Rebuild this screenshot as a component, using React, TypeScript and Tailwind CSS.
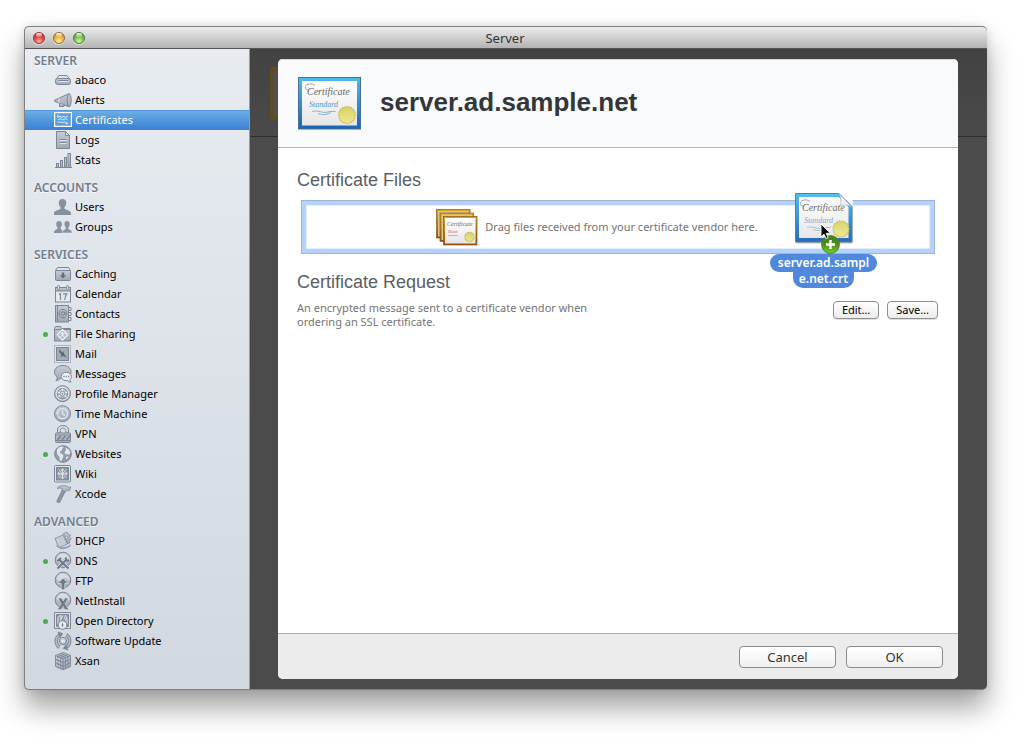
import React from 'react';

const line = '#7d8695';
const pale = '#dfe4ea';

function Glyph({ name }: { name: string }) {
  const g = 'url(#steel)';
  switch (name) {
    case 'abaco':
      return (
        <g stroke={line} fill={g}>
          <path d="M5 5.500h8l3 4h-14z" fill={pale} />
          <rect x="1.500" y="8.500" width="15" height="6" rx="2.200" />
          <path d="M4 11.500h10" stroke={pale} />
          <path d="M4 10.500h10" />
        </g>
      );
    case 'alerts':
      return (
        <g stroke={line} fill={g} strokeLinejoin="round">
          <path d="M.5 10.200 14.500 3.800v12.800L.5 11.400z" />
          <ellipse cx="15.200" cy="10.200" rx="2" ry="6.500" />
          <path d="M5.500 13.500v3h4.500v-1.500" />
          <path d="M5 8.500v4.500" stroke={pale} />
        </g>
      );
    case 'certificates':
      return (
        <g stroke="#fff" fill="none">
          <rect x=".6" y="2.600" width="16.800" height="13.800" strokeWidth="1.200" fill="#5b9fe0" />
          <path d="M3 5l2.500 2M3 7.500l3-1.500 2 1.500L10 6l1 1.500 3-1.500M4 9.500l3-.7 1.500 1 3-1 2 .7M3.500 12h3.500l1 .8 2-1 3.500 1.200M11.500 13.800h2.500" strokeWidth=".9" opacity=".85" />
        </g>
      );
    case 'logs':
      return (
        <g stroke={line} fill={g}>
          <path d="M2.500 1.500h9l4 4v13h-13z" />
          <path d="M11.500 1.500v4h4z" fill={pale} />
          <path d="M5.500 9.500h7M5.500 12.500h7" />
          <path d="M5.500 10.500h7M5.500 13.500h7" stroke={pale} />
        </g>
      );
    case 'stats':
      return (
        <g stroke={line} fill={g}>
          <rect x="2.500" y="13.500" width="2" height="4" />
          <rect x="6.500" y="10.500" width="2" height="7" />
          <rect x="10.500" y="7.500" width="2" height="10" />
          <rect x="14" y="3.500" width="2.500" height="14" />
          <path d="M1 17.500h17" />
        </g>
      );
    case 'users':
      return (
        <path fill="#87909d" d="M8.500 2c2.300 0 3.800 1.600 3.700 4 0 1.800-.8 3.200-1.700 4.100v1.700c1 1.200 6 1.500 6.500 4V18H0v-2.200c.5-2.500 5.500-2.800 6.500-4v-1.700C5.600 9.200 4.800 7.800 4.800 6 4.700 3.600 6.200 2 8.500 2z" />
      );
    case 'groups':
      return (
        <g fill="#8992a0">
          <path d="M5 4c1.800 0 3 1.200 2.900 3.200 0 1.300-.6 2.500-1.300 3.200v1.400c.8 1 2.200 1.200 2.200 3V16H0v-1.400c.4-1.600 2.800-1.900 3.500-2.800v-1.400C2.800 9.700 2.200 8.500 2.200 7.200 2.100 5.200 3.200 4 5 4z" />
          <path stroke="#e2e6ec" strokeWidth=".6" d="M13 3.800c1.900 0 3.100 1.300 3 3.300 0 1.400-.6 2.500-1.300 3.300v1.400c.7 1 3.300 1.200 3.300 3V16H8.600v-1.500c.4-1.600 2.200-1.900 2.900-2.800v-1.400c-.8-.7-1.400-1.800-1.400-3.200-.1-2 1.100-3.300 2.900-3.300z" />
        </g>
      );
    case 'caching':
      return (
        <g stroke={line} fill={g}>
          <path d="M3.500 3.500h11l2 3h-15z" fill={pale} />
          <rect x="1.500" y="6.500" width="15" height="10" rx="1" />
          <path d="M7.800 8.500h2.400v2.700h2L9 14.500l-3.200-3.300h2z" fill="#646d7c" stroke="none" />
        </g>
      );
    case 'calendar':
      return (
        <g stroke={line} fill={g}>
          <rect x="1.500" y="3.500" width="15" height="14.500" fill="#e5e9ee" />
          <rect x="1.500" y="3.500" width="15" height="3.500" />
          <rect x="3.500" y="1.500" width="2" height="4" rx="1" fill={pale} />
          <rect x="12.500" y="1.500" width="2" height="4" rx="1" fill={pale} />
          <path d="M5 10.500l1.500-1v6.500M9 9.900h3.800c-1.500 2-2 3.800-2.100 6.100" fill="none" strokeWidth="1.200" />
        </g>
      );
    case 'contacts':
      return (
        <g stroke={line} fill={g}>
          <path d="M14.500 3.500H17v3h-2.500zM14.500 8.500H17v3h-2.500zM14.500 13.500H17v3h-2.500z" fill={pale} />
          <rect x="1.500" y="1.500" width="13" height="16.500" />
          <path d="M3.500 2v15.500" />
          <g fill="none" stroke="#6f7888" strokeWidth=".9">
            <circle cx="9" cy="9.500" r="1.700" />
            <path d="M10.800 7.600v2.600c.2 1.600 2.200 1 2.100-.9 0-2.200-1.600-3.800-3.900-3.800s-4 1.700-4 4 1.700 4.200 4 4.200c1 0 1.800-.3 2.400-.7" />
          </g>
        </g>
      );
    case 'file-sharing':
      return (
        <g stroke={line} fill={g}>
          <path d="M.5 4.500l1-2h5l1 2h9v12.500h-16z" />
          <path d="M1 5.500h15" />
          <path d="M8.500 5.500l5.300 5.300-5.300 5.300-5.300-5.300z" fill="#b4bbc6" stroke="#f3f5f8" strokeWidth="1.200" />
          <path d="M8.500 8v3M8.500 10.800l-1.800 2.500M8.500 10.800l1.800 2.500M6.500 9.800h4" stroke="#f3f5f8" strokeWidth="1" />
        </g>
      );
    case 'mail':
      return (
        <g>
          <rect x=".5" y="1.500" width="16" height="17" fill={pale} stroke={line} strokeDasharray="1 1" />
          <rect x="2.500" y="3.500" width="12" height="13" fill="#a3abb7" stroke={line} />
          <path d="M5 5l3.500 3.800 1-1.500.6 2.800 2.800 3.500-3.500-1.700-3 .8 1.300-1.700L5.600 8.500z" fill="#5c6575" />
        </g>
      );
    case 'messages':
      return (
        <g stroke={line} fill={g}>
          <path d="M9 1.500c4.700 0 8 2.700 8 6.300s-3.300 6.500-8 6.500c-.7 0-1.500 0-2.200-.3-1.300 1.600-3 2.500-5 2.800 1.200-1.100 1.600-2.400 1.300-4C1.400 11.500.5 9.900.5 7.800c0-3.600 3.800-6.300 8.500-6.300z" />
          <path d="M12.300 8.300c3 0 5.200 1.800 5.200 4.200 0 1.400-.7 2.400-1.600 3.100 0 1 .3 1.800 1.100 2.500-1.500 0-2.700-.5-3.500-1.500-3.700.3-6.300-1.600-6.300-4.100 0-2.400 2.100-4.200 5.100-4.200z" fill="#edf0f4" />
          <path d="M9.300 12.500h1.300M11.700 12.500H13M14.100 12.500h1.300" strokeWidth="1.300" />
        </g>
      );
    case 'profile-manager':
      return (
        <g stroke={line} fill="none">
          <circle cx="8.500" cy="9.700" r="8" fill={g} />
          <circle cx="8.500" cy="9.700" r="6.300" stroke="#edf0f4" />
          <circle cx="8.500" cy="9.700" r="5.200" />
          <path d="M8.500 4.500v5.200l-4 3.300M8.500 9.700l4 3.300M3.600 8l4.900 1.700L13.400 8" stroke="#edf0f4" strokeWidth="1.300" />
          <circle cx="8.500" cy="9.700" r="2.300" fill="#edf0f4" stroke={line} strokeWidth=".8" />
          <circle cx="8.500" cy="9.700" r=".9" fill={line} stroke="none" />
        </g>
      );
    case 'time-machine':
      return (
        <g stroke={line} fill="none">
          <circle cx="8.500" cy="9.700" r="8" fill={g} />
          <path d="M3.900 11.500A5 5 0 1 0 5 6.200L3.200 8.500M8.500 6.500v3.500l2.500 1.500" stroke="#e6eaf0" strokeWidth="1.200" />
          <path d="M1.800 8.400l3.600.2-1.900 2.400z" fill="#e6eaf0" stroke="none" />
        </g>
      );
    case 'vpn':
      return (
        <g stroke={line} fill={g}>
          <path d="M3.500 9V6C3.500 3 5.800 1.500 9 1.500S14.500 3 14.500 6v3h-2.700V6.500c0-1.600-1-2.500-2.800-2.500s-2.800.9-2.800 2.500V9z" fill={pale} />
          <rect x="1.500" y="9" width="15" height="9.500" rx="1" />
          <path d="M2 11h14M2 16.500h14" />
          <path d="M3.500 15.700 7 11.800M8 15.700l3.500-3.900M12.500 15.700l3.500-3.900" strokeWidth="1.800" />
        </g>
      );
    case 'websites':
      return (
        <g>
          <circle cx="9" cy="10" r="8.300" fill="#929ba8" stroke={line} />
          <path d="M3 5.500 5.500 3l3-.7 1 1.200-1.500 1.300.4 1.200-2 1.300-.6 2 2 .2 1.700 2-.7 2.500-1.600 3-1.300-.6-.6-4-1.900-1.700-.6-3zM11.500 3.500l3.500 2 1.500 3-1.500 2.500-2-1-1.500.5-1-2.500 1.500-2zM12 13l2-.7.5 1.300-2.500 2z" fill="#e3e7ed" />
        </g>
      );
    case 'wiki':
      return (
        <g>
          <rect x=".5" y="1.500" width="16" height="16.500" rx="1" fill={pale} stroke={line} />
          <rect x="2.500" y="3.500" width="12" height="12.500" fill="#8a93a1" stroke={line} />
          <path d="M8.500 4.500v10.500M3.500 9.700h10M4.500 5.500l8 8.500M12.500 5.500l-8 8.500M7 5l1.500 2L10 5M7 14.700l1.500-2 1.500 2M4 8.200l2 1.500-2 1.500M13 8.200l-2 1.500 2 1.500" stroke="#e3e7ed" strokeWidth=".9" fill="none" />
        </g>
      );
    case 'xcode':
      return (
        <g stroke={line} strokeWidth=".8">
          <path d="M8.300 6.200 11.200 7.500 5.800 18.300c-.8.900-3.200.1-3-1.200z" fill="#8a93a1" />
          <path d="M3 4.500C5 2 9 .9 12.500 2l2.500 1.300 1.800-.4-1.300 3.900-1.500-.8-1 .2-1.500 1.900-3.800-1.800.8-1.500C7.300 3.900 5.500 3.900 3 4.500z" fill={g} />
        </g>
      );
    case 'dhcp':
      return (
        <g stroke={line} strokeWidth=".8" fill={g}>
          <path d="M2 14.500c4 3.500 10 3.200 15-.8M6 17.500c4 .3 7-.5 10-2.300" fill="none" />
          <path d="M1 7.500 9 4l4.500 9-8.500 3.700z" fill="#c6ccd5" />
          <path d="M9.500 2.500 13 1.200l1 2.300 2.300.5-.8 2.200 1.800 1.800-2 1.500.4 2.500-2.400.5z" />
          <circle cx="12.500" cy="6.500" r="1.300" fill={pale} />
          <path d="M3.500 8.500l1.300 2.500" stroke={pale} />
        </g>
      );
    case 'dns':
    case 'ftp':
    case 'netinstall':
      return (
        <g>
          <circle cx="9" cy="9" r="7.800" fill={g} stroke={line} />
          <path d="M3 6.500 6 3l3-.6L12.500 3.500 15 6l.8 3-2.600-.5-1.200-2-2 .5-1 1.800-2-.5L5.500 10 3 8.800z" fill={pale} opacity=".75" />
          {name === 'dns' && (
            <>
              <path d="M3.500 17.500l9-9M14.500 17.500l-9.500-9" stroke={pale} strokeWidth="3.400" />
              <path d="M3.500 17.500l9-9M14.500 17.500l-9.500-9M12 6.500v3h3M3.500 10l3.500-3" stroke="#6e7786" strokeWidth="2" fill="none" />
            </>
          )}
          {name === 'ftp' && (
            <path d="M9 7l5 5.500h-3.200v6.200H7.200v-6.200H4z" fill="#707988" stroke={pale} strokeWidth=".7" />
          )}
          {name === 'netinstall' && (
            <path d="M3.800 7h3.800l1.600 3L11 7h3.500l-3.500 5.500 3.900 6.200h-4L9 15.300l-2 3.400H3.200l3.900-6z" fill="#707988" stroke={pale} strokeWidth=".6" />
          )}
        </g>
      );
    case 'open-directory':
      return (
        <g>
          <path d="M.5 1.500h16v16H.5z" fill={pale} stroke={line} />
          <path d="M2.500 3.500h12v12h-12z" fill="#9099a6" stroke={line} />
          <path d="M4 13V6.500L7 4v4l2-3.500M11 4l2 3v6M6 11l1.500-4M11.500 9.500l-1-4" stroke={pale} fill="none" />
          <circle cx="8.500" cy="14" r="4.300" fill="#e8ebf0" stroke={line} />
          <path d="M8.500 11.200l1 2.800-1 2.800-1-2.800z" fill={line} />
        </g>
      );
    case 'software-update':
      return (
        <g fill="none" stroke={line}>
          <path d="M5.500 16.300A7.200 7.200 0 0 1 5.800 4M12.200 3.800A7.200 7.200 0 0 1 12.500 16" strokeWidth="3.400" />
          <path d="M5.500 16.300A7.200 7.200 0 0 1 5.800 4M12.200 3.800A7.200 7.200 0 0 1 12.500 16" stroke="#b6bdc8" strokeWidth="1.500" />
          <path d="M4 1l5 1.500-3.200 4.300zM14 19l-5-1.500 3.200-4.300z" fill={line} strokeWidth=".5" />
          <circle cx="9" cy="10" r="3.700" fill={g} />
          <path d="M9 7.500v5M6.800 8.800l4.400 2.500M11.200 8.800l-4.400 2.500" stroke="#edf0f4" />
        </g>
      );
    case 'xsan':
      return (
        <g stroke={line} strokeWidth=".9" fill={g}>
          <path d="M1.500 4.500 9 1.500l7.500 3v11L9 18.800l-7.500-3.300z" />
          <path d="M1.500 4.500 9 7.800l7.500-3.300M9 7.800v11M4 5.600v11M6.500 6.700v11M11.500 6.700v11M14 5.600v11M1.500 8.200 9 11.500l7.500-3.300M1.500 11.800 9 15.200l7.500-3.400M4 3.500l7.500 3.200M6.500 2.500 14 5.600M14 3.500 6.500 6.700M11.500 2.500 4 5.600" fill="none" />
          <path d="M2.300 7l4 1.700M2.300 10.500l4 1.800M2.300 14l4 1.800" stroke={pale} strokeWidth=".6" />
        </g>
      );
    default:
      return null;
  }
}

type Item = { id: string; label: string; on?: boolean };
const sections: { title: string; items: Item[] }[] = [
  {
    title: 'SERVER',
    items: [
      { id: 'abaco', label: 'abaco' },
      { id: 'alerts', label: 'Alerts' },
      { id: 'certificates', label: 'Certificates' },
      { id: 'logs', label: 'Logs' },
      { id: 'stats', label: 'Stats' },
    ],
  },
  {
    title: 'ACCOUNTS',
    items: [
      { id: 'users', label: 'Users' },
      { id: 'groups', label: 'Groups' },
    ],
  },
  {
    title: 'SERVICES',
    items: [
      { id: 'caching', label: 'Caching' },
      { id: 'calendar', label: 'Calendar' },
      { id: 'contacts', label: 'Contacts' },
      { id: 'file-sharing', label: 'File Sharing', on: true },
      { id: 'mail', label: 'Mail' },
      { id: 'messages', label: 'Messages' },
      { id: 'profile-manager', label: 'Profile Manager' },
      { id: 'time-machine', label: 'Time Machine' },
      { id: 'vpn', label: 'VPN' },
      { id: 'websites', label: 'Websites', on: true },
      { id: 'wiki', label: 'Wiki' },
      { id: 'xcode', label: 'Xcode' },
    ],
  },
  {
    title: 'ADVANCED',
    items: [
      { id: 'dhcp', label: 'DHCP' },
      { id: 'dns', label: 'DNS', on: true },
      { id: 'ftp', label: 'FTP' },
      { id: 'netinstall', label: 'NetInstall' },
      { id: 'open-directory', label: 'Open Directory', on: true },
      { id: 'software-update', label: 'Software Update' },
      { id: 'xsan', label: 'Xsan' },
    ],
  },
];

function Seal({ cx, cy, r }: { cx: number; cy: number; r: number }) {
  const points = Array.from({ length: 36 }, (_, i) => {
    const a = (i * Math.PI) / 18;
    const d = i % 2 ? r * 0.86 : r;
    return `${(cx + d * Math.cos(a)).toFixed(2)},${(cy + d * Math.sin(a)).toFixed(2)}`;
  }).join(' ');
  return <polygon points={points} fill="url(#seal)" stroke="#b5ad35" strokeWidth=".6" />;
}

function Lettering({ accent }: { accent: string }) {
  return (
    <>
      <text x="9" y="18" fontFamily="Liberation Serif, serif" fontStyle="italic" fontSize="10" fill="#666">
        Certificate
      </text>
      <text x="11" y="30" fontFamily="Liberation Serif, serif" fontStyle="italic" fontSize="8" fill={accent}>
        Standard
      </text>
      <path d="M17 8.500C13 5 6 7.500 7.500 11.500c1 2 4 1.500 4-.5" fill="none" stroke="#777" strokeWidth=".7" />
      <path d="M14 34.500c5-2 9 1.500 14 .8 4-.6 5-1.300 9.500-.8M20 36.500c5 2 9 1 13-1" fill="none" stroke={accent} strokeWidth=".7" />
    </>
  );
}

function Certificate() {
  return (
    <svg width="63" height="53" viewBox="0 0 63 53" className="shrink-0" aria-hidden="true">
      <rect x=".5" y=".5" width="62" height="51.500" fill="url(#frame)" stroke="#4a6f96" />
      <rect x="4" y="4" width="55" height="44.500" fill="url(#paper)" />
      <Lettering accent="#5e93c8" />
      <Seal cx={49} cy={38} r={9} />
    </svg>
  );
}

function CertificateStack() {
  return (
    <svg width="42" height="37" viewBox="0 0 42 37" className="shrink-0" aria-hidden="true">
      {[0, 3.5, 7].map((o) => (
        <g key={o}>
          <rect x={o + 0.5} y={o + 0.5} width="33.500" height="28.500" fill="url(#gold)" stroke="#8a5a12" strokeWidth=".7" />
          <rect x={o + 2} y={o + 2} width="30.500" height="25.500" fill={o === 7 ? 'url(#paper)' : '#d9c58f'} />
        </g>
      ))}
      <text x="11" y="17" fontFamily="Liberation Serif, serif" fontStyle="italic" fontSize="6" fill="#666">
        Certificate
      </text>
      <text x="12" y="24" fontFamily="Liberation Serif, serif" fontStyle="italic" fontSize="5" fill="#cf5a66">
        Root
      </text>
      <path d="M12 26.500h10" stroke="#e3949b" strokeWidth=".8" />
      <Seal cx={33.5} cy={28} r={5} />
    </svg>
  );
}

function DraggedFile() {
  return (
    <div className="absolute -top-[8px] right-[56px] flex w-[109px] flex-col items-center">
      <svg width="62" height="62" viewBox="0 0 62 62" className="relative z-10 opacity-95" aria-hidden="true">
        <path d="M3.500 2h42l14 13v35.500h-56z" fill="#000" opacity=".25" />
        <path d="M2.500.5h43.500l13 13V49h-56.500z" fill="url(#frame)" stroke="#56779f" />
        <path d="M6 4h39.500L55.500 14v31H6z" fill="url(#paper)" />
        <Lettering accent="#7ba9d6" />
        <Seal cx={48} cy={36} r={8.500} />
        <path d="M46 .5 59 14c-3-2-8-2.500-11.500-1.500C48.500 9 48 4 46 .5z" fill="#f4f5f6" stroke="#9aa0a8" strokeWidth=".6" />
        <path d="M46.700.3h13v13z" fill="#fff" />
        <circle cx="37.500" cy="51.500" r="9" fill="url(#plus)" stroke="#3f7412" strokeWidth=".8" />
        <path d="M37.500 47v9M33 51.500h9" stroke="#fff" strokeWidth="2.400" />
        <path d="M28 31v13l3-2.800 2 4.300 2.200-1-2-4.200h4.300z" fill="#000" stroke="#fff" strokeWidth=".9" />
      </svg>
      <div className="-mt-px flex flex-col items-center text-center text-[12px] font-semibold text-white">
        <span className="rounded-full bg-[#5088de] px-[8px] leading-[18px]">server.ad.sampl</span>
        <span className="-mt-[2px] rounded-b-[10px] bg-[#5088de] px-[6px] leading-[18px]">e.net.crt</span>
      </div>
    </div>
  );
}

function Defs() {
  const grad = (id: string, a: string, b: string, c?: string) => (
    <linearGradient id={id} x1="0" y1="0" x2="0" y2="1">
      <stop offset="0" stopColor={a} />
      {c && <stop offset=".5" stopColor={c} />}
      <stop offset="1" stopColor={b} />
    </linearGradient>
  );
  return (
    <svg width="0" height="0" className="absolute" aria-hidden="true">
      <defs>
        {grad('steel', '#c6ccd5', '#a0a8b5')}
        {grad('frame', '#4dbde8', '#1c62b5')}
        {grad('gold', '#dda321', '#9a5010')}
        {grad('paper', '#ffffff', '#e6e6e6')}
        {grad('seal', '#d8d166', '#efea8c')}
        {grad('plus', '#3b7a10', '#78cf1f', '#418a0c')}
      </defs>
    </svg>
  );
}

const lights = [
  { label: 'Close', tone: 'bg-[radial-gradient(circle_at_50%_85%,#ffb3ae,#e8494b_45%,#a8282c)] border-[#8c3a3a]' },
  { label: 'Minimize', tone: 'bg-[radial-gradient(circle_at_50%_85%,#fff0a0,#f0b545_45%,#b87820)] border-[#94702e]' },
  { label: 'Zoom', tone: 'bg-[radial-gradient(circle_at_50%_85%,#d8f8a8,#7fc456_45%,#468a2c)] border-[#4e7a3c]' },
];

export default function App() {
  return (
    <div className="flex min-h-screen flex-col bg-white pt-[26px] pr-[39px] pb-[54px] pl-[24px] font-['Noto_Sans','Open_Sans',sans-serif]">
      <Defs />
      <div className="flex flex-1 flex-col overflow-hidden rounded-[5px] border border-r-0 border-[#808080] bg-[#4b4b4b] shadow-[0_18px_28px_rgba(0,0,0,0.36),0_0_10px_rgba(0,0,0,0.12)]">
        <header className="relative flex h-[22px] items-center border-b border-[#555] bg-linear-to-b from-[#ececec] to-[#b4b4b4] px-2">
          <div className="flex gap-2">
            {lights.map((l) => (
              <button
                key={l.label}
                aria-label={l.label}
                className={`relative size-3 rounded-full border shadow-[0_1px_0_rgba(255,255,255,0.6)] ${l.tone}`}
              >
                <span className="absolute inset-x-[2px] top-0 h-[4px] rounded-full bg-linear-to-b from-white/90 to-white/20" />
              </button>
            ))}
          </div>
          <h1 className="flex-1 pr-[54px] text-center text-[13px] leading-5 text-[#333]">Server</h1>
        </header>

        <div className="flex flex-1">
          <nav className="w-[225px] shrink-0 border-r border-[#999] bg-linear-to-b from-[#e8ecf1] to-[#d1d8e0] pb-[17px]">
            {sections.map((s, i) => (
              <section key={s.title}>
                <h2
                  className={`pl-[9px] text-[12px] leading-[18px] font-semibold text-[#717e8c] [text-shadow:0_1px_0_rgba(255,255,255,0.7)] ${i ? 'pt-[9px]' : 'pt-[3px]'}`}
                >
                  {s.title}
                </h2>
                <ul>
                  {s.items.map((it) => {
                    const selected = it.id === 'certificates';
                    return (
                      <li key={it.id}>
                        <button
                          aria-current={selected ? 'page' : undefined}
                          className={`flex h-5 w-full items-center pl-[18px] text-left text-[11px] leading-5 ${
                            selected
                              ? 'bg-linear-to-b from-[#6cb0e8] to-[#3a80d0] text-white shadow-[inset_0_1px_0_#5599dd]'
                              : 'text-black'
                          }`}
                        >
                          <span
                            className={`mr-[6px] size-[5px] rounded-full ${it.on ? 'bg-[#51aa52]' : ''}`}
                          />
                          <svg width="18" height="20" viewBox="0 0 18 20" className="mr-[3px] shrink-0" aria-hidden="true">
                            <Glyph name={it.id} />
                          </svg>
                          {it.label}
                        </button>
                      </li>
                    );
                  })}
                </ul>
              </section>
            ))}
          </nav>

          <main className="relative flex flex-1 pt-[10px] pr-[29px] pb-[10px] pl-[28px]">
            <div className="absolute inset-x-0 top-0 h-[88px] border-b border-[#2e2e2e] bg-linear-to-b from-[#424242] to-[#4a4a4a]">
              <div className="absolute top-[18px] left-[20px] h-[53px] w-[60px] border-4 border-[#5e4d20] bg-[#505050]" />
            </div>
            <div
              role="dialog"
              aria-labelledby="host"
              className="relative flex flex-1 flex-col overflow-hidden rounded-[5px] bg-white"
            >
              <div className="flex h-[89px] items-center gap-[19px] border-t border-b border-t-[#d8d8d8] border-b-[#b4b4b4] bg-[#f8fafc] pl-[20px]">
                <Certificate />
                <h2 id="host" className="pb-[3px] font-['Liberation_Sans',sans-serif] text-[26px] font-bold text-[#333739]">
                  server.ad.sample.net
                </h2>
              </div>

              <div className="flex-1 pt-[20px] pr-[20px] pl-[19px]">
                <h3 className="font-['Liberation_Sans',sans-serif] text-[18px] leading-6 text-[#5a5e63]">Certificate Files</h3>
                <div className="relative mt-[8px] mr-[3px] ml-[4px] h-[54px] border border-[#9fb4d2] bg-[#b5d2fd] p-[4px]">
                  <div className="flex h-full items-center justify-center gap-[7px] border border-[#e4eeff] bg-white pr-[42px]">
                    <CertificateStack />
                    <p className="text-[11px] text-[#747474]">Drag files received from your certificate vendor here.</p>
                  </div>
                  <DraggedFile />
                </div>

                <h3 className="mt-[16px] font-['Liberation_Sans',sans-serif] text-[18px] leading-6 text-[#5a5e63]">
                  Certificate Request
                </h3>
                <div className="mt-[7px] flex items-start justify-between">
                  <p className="w-[320px] text-[11px] leading-[14px] text-[#747474]">
                    An encrypted message sent to a certificate vendor when ordering an SSL certificate.
                  </p>
                  <div className="flex gap-2">
                    {['Edit…', 'Save…'].map((t) => (
                      <button
                        key={t}
                        className="h-[18px] rounded-[4px] border border-[#8e8e8e] bg-linear-to-b from-white to-[#ececec] px-2 text-[11px] leading-4 text-black shadow-[0_1px_0_rgba(0,0,0,0.12)]"
                      >
                        {t}
                      </button>
                    ))}
                  </div>
                </div>
              </div>

              <footer className="flex h-[46px] items-center justify-end gap-[10px] border-t border-[#b0b0b0] bg-[#ececec] pr-[15px]">
                {['Cancel', 'OK'].map((t) => (
                  <button
                    key={t}
                    className="h-[22px] w-[97px] rounded-[4px] border border-[#8c8c8c] bg-linear-to-b from-white to-[#f0f0f0] text-[13px] leading-5 text-[#333]"
                  >
                    {t}
                  </button>
                ))}
              </footer>
            </div>
          </main>
        </div>
      </div>
    </div>
  );
}
